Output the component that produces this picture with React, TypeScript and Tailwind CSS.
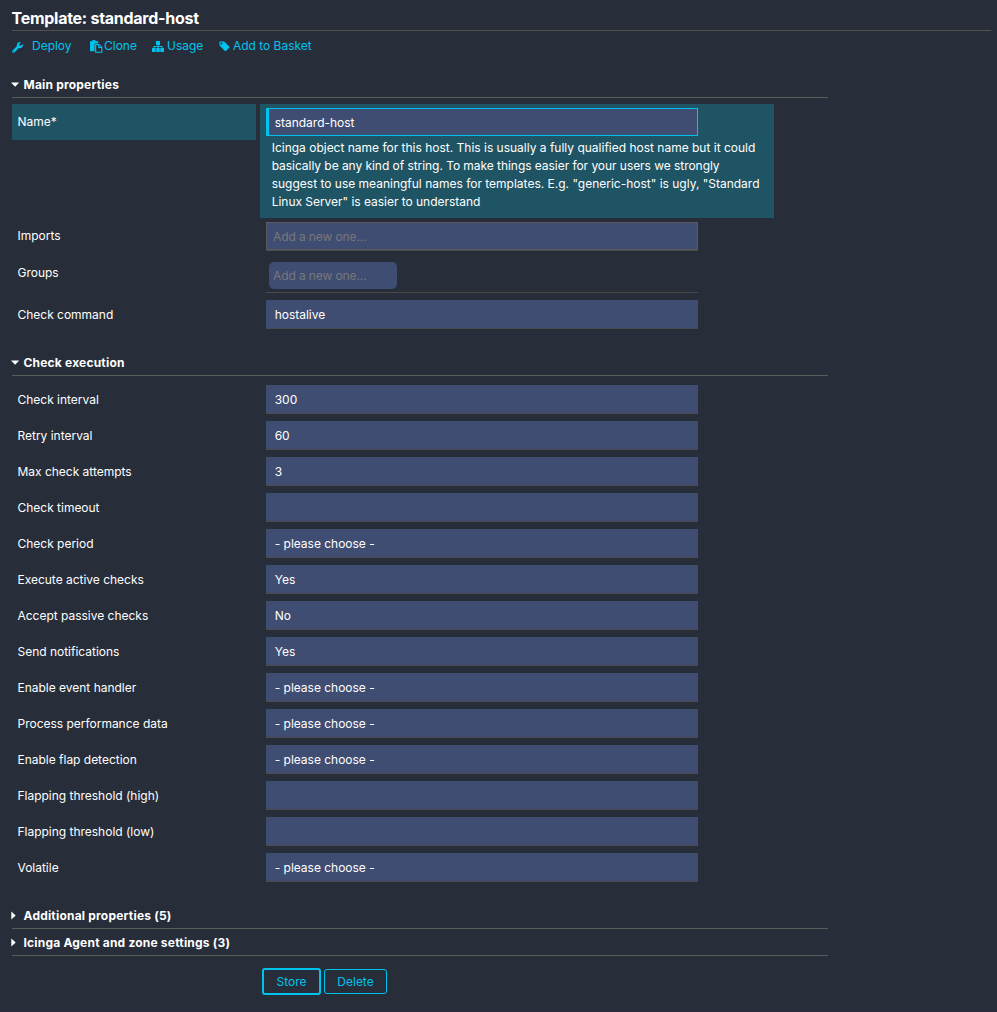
import type { ReactNode } from "react";
import { FaWrench } from "react-icons/fa";

function PasteIcon({ className }: { className: string }) {
  return (
    <svg className={className} viewBox="0 0 13 13" fill="currentColor">
      <path d="M0 1.2h2.4V0h3v1.2h2.8v2.3H4.6v7.7H0z" />
      <path fillRule="evenodd" d="M5.1 4h4.2L12.4 7v5.8H5.1zM6.2 5.1v6.6h5.1V8H8.2V5.1zM9.2 5.3v1.7h1.8z" />
    </svg>
  );
}

function SitemapIcon({ className }: { className: string }) {
  return (
    <svg className={className} viewBox="0 0 12 11" fill="currentColor">
      <path d="M4 0h4v4H6.5v1h4v2H12v4H8V7h1.5V6h-3v1H8v4H4V7h1.5V6h-3v1H3.7v4H0V7h1.5V5h4V4H4z" />
      <path d="M3.7 7h.6v4h-.6zM7.7 7h.6v4h-.6z" fill="#282e39" />
    </svg>
  );
}

function TagIcon({ className }: { className: string }) {
  return (
    <svg className={className} viewBox="0 0 11 11" fill="currentColor">
      <path
        fillRule="evenodd"
        d="M0.3 1.2Q0.3 0.4 1.1 0.4L4.6 0.6Q5.2 0.6 5.7 1.1L10.2 5.6Q10.7 6.2 10.2 6.7L7 9.9Q6.5 10.3 5.9 9.9L1.2 5.3Q0.7 4.8 0.6 4.2zM2.4 1.5a1 1 0 1 0 0 2a1 1 0 0 0 0-2z"
      />
    </svg>
  );
}

function SectionTitle({ open, children }: { open?: boolean; children: ReactNode }) {
  return (
    <h2 className="flex h-[27px] w-[816px] items-center border-b border-[#5b5b5b] pt-px text-[12px] font-bold tracking-[0.2px] whitespace-nowrap">
      <svg className="-ml-px mr-[3.5px] h-[9px] w-[9px]" viewBox="0 0 9 9" fill="currentColor">
        {open ? <path d="M0 2.4h8.2L4.1 6.7z" /> : <path d="M0.3 0.6l4.4 3.9L0.3 8.4z" />}
      </svg>
      {children}
    </h2>
  );
}

function Row({ label, low, children }: { label: string; low?: boolean; children: ReactNode }) {
  return (
    <div className="flex h-9 gap-1">
      <div className={`w-[244px] pl-[5.5px] leading-[18px] whitespace-nowrap ${low ? "pt-[10px]" : "pt-[9px]"}`}>
        {label}
      </div>
      <div className="w-[514px] pt-1 pl-1.5">{children}</div>
    </div>
  );
}

function Field({ value }: { value: string }) {
  return (
    <div className="flex h-[29px] w-[432px] items-center border-b border-[#4b4b4f] bg-[#404d72] pt-0.5 pl-[8.7px]">
      {value}
    </div>
  );
}

const execution: [string, string][] = [
  ["Check interval", "300"],
  ["Retry interval", "60"],
  ["Max check attempts", "3"],
  ["Check timeout", ""],
  ["Check period", "- please choose -"],
  ["Execute active checks", "Yes"],
  ["Accept passive checks", "No"],
  ["Send notifications", "Yes"],
  ["Enable event handler", "- please choose -"],
  ["Process performance data", "- please choose -"],
  ["Enable flap detection", "- please choose -"],
  ["Flapping threshold (high)", ""],
  ["Flapping threshold (low)", ""],
  ["Volatile", "- please choose -"],
];

export default function App() {
  return (
    <div className="flex h-[1012px] w-[997px] flex-col overflow-hidden border-b border-[#2e2540] bg-[#282e39] pl-3 font-['Inter',sans-serif] text-[12px] leading-[18px] tracking-[-0.015px] text-white">
      <h1 className="h-[31px] w-[979px] border-b border-[#535150] pt-[9px] text-[16px] leading-[19px] font-bold tracking-[-0.27px]">
        <span className="-ml-[0.5px]">Template: standard-host</span>
      </h1>
      <nav className="flex h-[30px] items-center whitespace-nowrap text-[#00c3ed]">
        <a className="flex w-[78px] items-center">
          <FaWrench className="mt-0.5 mr-[9px] h-[11px] w-[11px]" />Deploy
        </a>
        <a className="flex w-[62px] items-center">
          <PasteIcon className="mr-px h-[13px] w-[13px]" />Clone
        </a>
        <a className="flex w-[67px] items-center">
          <SitemapIcon className="mr-[3px] h-[11px] w-[12px]" />Usage
        </a>
        <a className="flex items-center">
          <TagIcon className="mr-[3px] h-[11px] w-[11px]" />Add to Basket
        </a>
      </nav>

      <div className="mt-[10px]">
        <SectionTitle open>Main properties</SectionTitle>
      </div>
      <div className="mt-1.5 flex h-[114px] gap-1">
        <div className="h-9 w-[244px] bg-[#1f5464] pt-[9px] pl-[5.5px]">Name*</div>
        <div className="w-[514px] bg-[#1f5464] pt-1 pl-1.5">
          <div className="flex h-7 w-[432px] items-center border border-l-3 border-[#00c3ed] bg-[#404d72] pt-0.5 pl-[5.7px]">
            standard-host
          </div>
          <p className="pt-[3px] pl-[5.7px] tracking-[-0.005px] whitespace-nowrap">
            Icinga object name for this host. This is usually a fully qualified host name but it could
            <br />
            <span className="tracking-[-0.05px]">
              basically be any kind of string. To make things easier for your users we strongly
            </span>
            <br />
            suggest to use meaningful names for templates. E.g. "generic-host" is ugly, "Standard
            <br />
            <span className="tracking-[-0.03px]">Linux Server" is easier to understand</span>
          </p>
        </div>
      </div>
      <Row label="Imports">
        <div className="w-[432px] border-b border-[#4b4b4f]">
          <div className="flex h-7 items-center border border-[#5b5b5e] bg-[#404d72] pt-0.5 pl-1.5 tracking-[-0.1px] text-[#77777b]">
            Add a new one...
          </div>
        </div>
      </Row>
      <div className="flex h-[42px] gap-1">
        <div className="w-[244px] pt-[10px] pl-[5.5px]">Groups</div>
        <div className="ml-1.5 h-[39px] w-[432px] border-b border-[#4b4947] pt-2 pl-[3px]">
          <div className="flex h-[27px] w-32 items-center rounded-[5px] bg-[#404d72] pl-1 tracking-[-0.1px] text-[#77777b]">
            Add a new one...
          </div>
        </div>
      </div>
      <Row label="Check command" low>
        <Field value="hostalive" />
      </Row>

      <div className="mt-[17px] mb-[5px]">
        <SectionTitle open>Check execution</SectionTitle>
      </div>
      {execution.map(([label, value]) => (
        <Row key={label} label={label} low>
          <Field value={value} />
        </Row>
      ))}

      <div className="mt-[17px]">
        <SectionTitle>Additional properties (5)</SectionTitle>
        <SectionTitle>Icinga Agent and zone settings (3)</SectionTitle>
      </div>
      <div className="mt-3 flex items-center gap-[3px] pl-[250px] text-[#00c3ed]">
        <button className="h-[27px] w-[59px] rounded-[3px] border-2 border-[#00c3ed]">Store</button>
        <button className="h-[25px] w-[63px] rounded-[3px] border border-[#00c3ed]">Delete</button>
      </div>
    </div>
  );
}
